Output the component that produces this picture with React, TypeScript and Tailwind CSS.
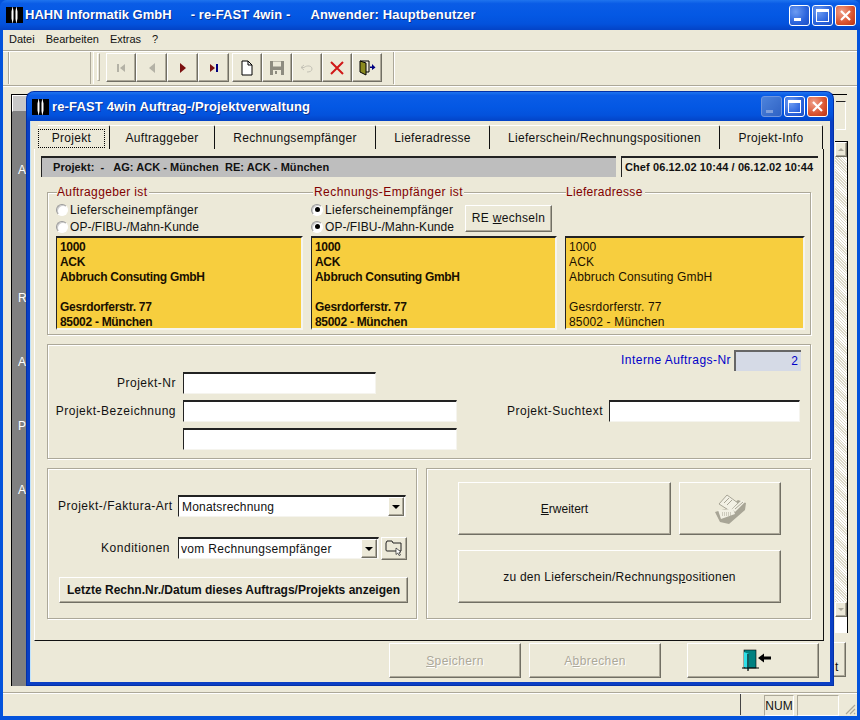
import { type ReactNode } from 'react';

const raised =
  'border border-t-white border-l-white border-r-[#716f64] border-b-[#716f64] bg-[#ece9d8] shadow-[inset_-1px_-1px_0_#aca899]';
const sunken =
  'border-t-2 border-l border-r border-b border-t-[#222] border-l-[#222] border-r-[#f5f4ee] border-b-[#f5f4ee]';
const group = 'border border-[#aca899] shadow-[inset_1px_1px_0_#fff,1px_1px_0_#fff]';

const titleBar =
  'bg-[linear-gradient(180deg,#1f74ee_0%,#0a5ce6_12%,#0458e4_50%,#0352dc_80%,#0343c6_100%)]';

function Logo() {
  return (
    <svg width="17" height="16" viewBox="0 0 17 16" className="shrink-0">
      <rect width="17" height="16" fill="#fff" />
      <path d="M0 0h6.500L5.500 4.500v7l1 4.500H0z" fill="#000" />
      <path d="M17 0h-6.500l1 4.500v7l-1 4.500H17z" fill="#000" />
      <path d="M6.800 0h3.400L9.500 4v8l.7 4H6.800l.7-4V4z" fill="#000" />
    </svg>
  );
}

function WinButton({ kind, faded }: { kind: 'min' | 'max' | 'close'; faded?: boolean }) {
  const bg =
    kind === 'close'
      ? 'bg-[radial-gradient(circle_at_30%_30%,#f0a08a,#d9532f_60%,#b83214)]'
      : faded
        ? 'bg-[linear-gradient(135deg,#4d83dc,#2f62c4)]'
        : 'bg-[radial-gradient(circle_at_30%_30%,#6d9cf2,#2a63dc_60%,#1d4fc4)]';
  return (
    <div className={`w-[21px] h-[21px] rounded-[3px] border ${faded ? 'border-[#6f95dd]' : 'border-white'} ${bg} flex items-center justify-center`}>
      {kind === 'min' && (
        <div className={`w-[7px] h-[3px] mt-[9px] -ml-[4px] ${faded ? 'bg-[#7f9fdc]' : 'bg-white'}`} />
      )}
      {kind === 'max' && <div className="w-[13px] h-[13px] border border-t-[3px] border-white" />}
      {kind === 'close' && (
        <svg width="13" height="13" viewBox="0 0 13 13">
          <path d="M2 2l9 9M11 2l-9 9" stroke="#fff" strokeWidth="2.200" />
        </svg>
      )}
    </div>
  );
}

function ToolButton({ children, w = 'w-[30px]' }: { children: ReactNode; w?: string }) {
  return <div className={`${raised} ${w} h-[29px] flex items-center justify-center`}>{children}</div>;
}

function Door({ small }: { small?: boolean }) {
  if (small) {
    return (
      <svg width="17" height="16" viewBox="0 0 17 16">
        <path d="M1 1h9v11H7" fill="none" stroke="#000" />
        <path d="M1 1l6 2v12l-6-3z" fill="#8a8a20" stroke="#000" />
        <path d="M11 6.500h2V4l3.500 3.500L13 10V8h-2z" fill="#000080" />
      </svg>
    );
  }
  return (
    <svg width="30" height="24" viewBox="0 0 30 24">
      <rect x="2" y="1" width="12" height="18" fill="#008080" stroke="#000" strokeWidth="0.600" />
      <path d="M2 3l5 2v16l-5-3z" fill="#2fe0e8" />
      <path d="M6 5v17" stroke="#000" strokeWidth="1.200" />
      <path d="M0 19h17" stroke="#000" />
      <path d="M16 9l6-4.500V7.500h7v3h-7V13.500z" fill="#000" />
    </svg>
  );
}

function Radio({ checked, label, tracking }: { checked?: boolean; label: string; tracking: string }) {
  return (
    <div className="flex items-center h-[17px] whitespace-nowrap">
      <div className="w-[12px] h-[12px] rounded-full border border-t-[#999] border-l-[#999] border-r-white border-b-white bg-white shadow-[inset_1px_1px_0_#ccc] flex items-center justify-center">
        {checked && <div className="w-[5px] h-[5px] rounded-full bg-black" />}
      </div>
      <span className={`ml-[2px] ${tracking}`}>{label}</span>
    </div>
  );
}

function AddressBox({ bold, w }: { bold?: boolean; w: string }) {
  return (
    <div className={`${w} h-[94px] overflow-hidden border-t-2 border-l border-r-2 border-b-2 border-t-[#222] border-l-[#222] border-r-[#f5f4ee] border-b-[#f5f4ee] bg-[#f7ce3e] pl-[3px] pt-[2px] leading-[15px] text-[#1a1000] ${bold ? 'font-bold tracking-[-0.3px]' : 'tracking-[0.15px]'}`}>
      <div>1000</div>
      <div>ACK</div>
      <div>Abbruch Consuting GmbH</div>
      <div>&nbsp;</div>
      <div>Gesrdorferstr. 77</div>
      <div>85002 - München</div>
    </div>
  );
}

function Tab({ label, w, active }: { label: string; w: string; active?: boolean }) {
  return (
    <div className={`${w} h-[24px] shrink-0 border-r border-r-[#111] border-t border-t-white rounded-tr-[2px] flex items-center justify-center pt-[1px] tracking-[0.3px]`}>
      {active ? (
        <div className="w-[67px] h-[19px] -ml-[4px] border border-dotted border-black flex items-center justify-center">
          {label}
        </div>
      ) : (
        label
      )}
    </div>
  );
}

function DropButton() {
  return (
    <div className={`${raised} w-[16px] h-[19px] shrink-0 flex items-center justify-center`}>
      <div className="w-0 h-0 border-l-[4px] border-r-[4px] border-t-[4px] border-l-transparent border-r-transparent border-t-black" />
    </div>
  );
}

function PrinterIcon() {
  return (
    <svg width="36" height="33" viewBox="0 0 36 33">
      <path d="M3 20l5 10 9 2 16-14 1-7-8-3-13 9z" fill="#a8a596" />
      <path d="M7 12l8-9 11 8-8 8z" fill="#f2f0e4" stroke="#a8a596" />
      <path d="M12 11l5-5M15 13l5-5" stroke="#a8a596" />
      <path d="M20 17l10-9 3 2-10 10z" fill="#f2f0e4" />
      <path d="M23 17l8-7M25 19l7-6" stroke="#a8a596" />
      <path d="M6 18l15-1 2 5-14 5z" fill="#f2f0e4" />
      <path d="M10 21h9M10 23h9" stroke="#a8a596" strokeDasharray="1 1" />
    </svg>
  );
}

function SideLabel({ text, y }: { text: string; y: string }) {
  return <div className={`absolute left-[6px] ${y} text-white tracking-[0.5px]`}>{text}</div>;
}

export default function App() {
  return (
    <div className="relative w-[860px] h-[720px] overflow-hidden bg-[#0353dc] font-['Liberation_Sans',Arial,sans-serif] text-[12px] text-[#111]">
      {/* main window */}
      <div className={`${titleBar} h-[30px] rounded-t-[7px] flex items-center pl-[6px] pr-[4px]`}>
        <Logo />
        <div className="ml-[2px] flex font-bold text-white text-[13px] [text-shadow:1px_1px_#0b2f8f]">
          <span>HAHN Informatik GmbH</span>
          <span className="ml-[19px] tracking-[0.1px]">- re-FAST 4win -</span>
          <span className="ml-[20px] tracking-[0.15px]">Anwender: Hauptbenutzer</span>
        </div>
        <div className="ml-auto flex gap-[2px]">
          <WinButton kind="min" />
          <WinButton kind="max" />
          <WinButton kind="close" />
        </div>
      </div>

      <div className="mx-[3px] h-[686px] flex flex-col bg-[#ece9d8]">
        <div className="h-[20px] flex items-center pl-[6px] pb-[2px] gap-[11px] text-[11px] shrink-0">
          <span>Datei</span>
          <span>Bearbeiten</span>
          <span>Extras</span>
          <span>?</span>
        </div>

        {/* toolbars */}
        <div className="h-[36px] shrink-0 border-t border-t-[#aca899] border-b border-b-[#aca899] shadow-[inset_0_1px_0_#fff,0_1px_0_#fff] flex">
          <div className="w-[5px]" />
          <div className="w-[83px] border-l border-l-[#aca899] border-r border-r-[#aca899] shadow-[inset_1px_0_0_#fff] my-[1px]" />
          <div className="w-[301px] ml-[2px] border-l border-l-white border-r border-r-[#aca899] my-[1px] flex items-start pt-[1px]">
            <div className="w-[3px] h-[28px] ml-[3px] mr-[6px] border border-t-white border-l-white border-r-[#aca899] border-b-[#aca899]" />
            <div className="flex">
              <ToolButton>
                <svg width="12" height="12" viewBox="0 0 12 12"><path d="M2 2h2v8H2zM10 2v8L5 6z" fill="#b4b2a6" /></svg>
              </ToolButton>
              <ToolButton w="w-[31px]">
                <svg width="12" height="12" viewBox="0 0 12 12"><path d="M9 1v10L3 6z" fill="#b4b2a6" /></svg>
              </ToolButton>
              <ToolButton w="w-[31px]">
                <svg width="12" height="12" viewBox="0 0 12 12"><path d="M3 1v10l6-5z" fill="#7b1010" /></svg>
              </ToolButton>
              <ToolButton w="w-[31px]">
                <svg width="12" height="12" viewBox="0 0 12 12"><path d="M2 2v8l5-4z" fill="#7b1010" /><path d="M8 2h2v8H8z" fill="#000080" /></svg>
              </ToolButton>
              <div className="w-[3px]" />
              <ToolButton>
                <svg width="14" height="16" viewBox="0 0 14 16"><path d="M2 1h6l4 4v10H2z" fill="#fff" stroke="#000" /><path d="M8 1v4h4" fill="none" stroke="#000" /></svg>
              </ToolButton>
              <ToolButton>
                <svg width="16" height="16" viewBox="0 0 16 16"><path d="M1 1h14v14H1z" fill="#8e8c80" /><path d="M4 1.500h8v5H4z" fill="#ece9d8" /><path d="M4 10h8v5H4z" fill="#ece9d8" /><path d="M6 11h2v3H6z" fill="#8e8c80" /></svg>
              </ToolButton>
              <ToolButton>
                <svg width="14" height="10" viewBox="0 0 14 10"><path d="M4 2L1 4.500 4 7" fill="none" stroke="#c4c2b6" /><path d="M1 4.500h3c3-2.500 8-2 8 1.500 0 2-2 3-5 3" fill="none" stroke="#c4c2b6" /></svg>
              </ToolButton>
              <ToolButton>
                <svg width="16" height="16" viewBox="0 0 16 16"><path d="M2 2l12 12M14 2L2 14" stroke="#d01818" strokeWidth="2" /></svg>
              </ToolButton>
              <ToolButton>
                <Door small />
              </ToolButton>
            </div>
          </div>
          <div className="flex-1 border-l border-l-white" />
        </div>

        {/* mdi area */}
        <div className="relative flex-1 overflow-hidden">
          <div className="absolute left-[8px] top-[8px] w-[836px] h-[592px] border-l border-t border-l-black border-t-black">
            <div className="absolute left-0 top-0 w-[16px] h-full bg-[#808080]">
              <div className="w-[16px] h-[17px] bg-[#c8c8c8] border border-t-white border-l-white border-r-[#808080] border-b-[#808080]" />
              <SideLabel text="A" y="top-[66px]" />
              <SideLabel text="R" y="top-[194px]" />
              <SideLabel text="Ad" y="top-[258px]" />
              <SideLabel text="P" y="top-[322px]" />
              <SideLabel text="Au" y="top-[386px]" />
            </div>
            {/* pieces of the window behind */}
            <div className="absolute left-[824px] top-[6px] w-[10px] h-[29px] border-t border-r border-b border-t-[#222] border-r-white border-b-white" />
            <div className="absolute left-[823px] top-[46px] w-[13px] h-[492px] border-r border-b border-t border-black bg-[#e8e5d4] bg-[repeating-linear-gradient(45deg,#fff_0_1px,#dcd9c8_1px_2px)]">
              <div className={`${raised} h-[15px] flex items-center justify-center`}>
                <div className="w-0 h-0 border-l-[3px] border-r-[3px] border-b-[3px] border-l-transparent border-r-transparent border-b-[#aca899]" />
              </div>
              <div className={`${raised} absolute left-0 top-[460px] w-full h-[15px] flex items-center justify-center`}>
                <div className="w-0 h-0 border-l-[3px] border-r-[3px] border-t-[3px] border-l-transparent border-r-transparent border-t-[#aca899]" />
              </div>
              <div className="absolute left-0 top-[475px] w-full h-[16px] bg-white" />
            </div>
            <div className={`${raised} absolute left-[820px] top-[547px] w-[14px] h-[35px] text-[12px] flex items-end leading-[18px] pl-[2px]`}>t</div>
            <div className="absolute left-[16px] top-[587px] w-[96px] h-[2px] bg-[#f5f4ee]" />
          </div>

          {/* dialog */}
          <div className="absolute left-[24px] top-[6px] w-[806px] h-[593px] rounded-t-[7px] bg-[#0a3fc4] shadow-[0_0_0_1px_#0331a8] flex flex-col">
            <div className={`${titleBar} h-[29px] shrink-0 rounded-t-[7px] flex items-center pl-[5px] pr-[5px]`}>
              <Logo />
              <div className="ml-[3px] font-bold text-white text-[13px] tracking-[0.15px] [text-shadow:1px_1px_#0b2f8f]">
                re-FAST 4win Auftrag-/Projektverwaltung
              </div>
              <div className="ml-auto flex gap-[2px]">
                <WinButton kind="min" faded />
                <WinButton kind="max" />
                <WinButton kind="close" />
              </div>
            </div>

            <div className="flex-1 mx-[3px] mb-[3px] bg-[#ece9d8] shadow-[inset_1px_0_0_#bfe3ff] flex flex-col pl-[4px] pt-[4px]">
              {/* tabs */}
              <div className="flex pl-[4px] h-[24px] shrink-0 w-[789px]">
                <Tab label="Projekt" w="w-[72px]" active />
                <Tab label="Auftraggeber" w="w-[105px]" />
                <Tab label="Rechnungsempfänger" w="w-[161px]" />
                <Tab label="Lieferadresse" w="w-[114px]" />
                <Tab label="Lieferschein/Rechnungspositionen" w="w-[230px]" />
                <Tab label="Projekt-Info" w="w-[103px]" />
              </div>

              {/* tab panel */}
              <div className="w-[790px] h-[492px] shrink-0 border-l border-l-white border-r border-r-[#111] border-b border-b-[#111] flex flex-col pl-[6px]">
                <div className="flex mt-[7px] h-[21px] shrink-0">
                  <div className="w-[575px] bg-[#bebebe] border-t-2 border-l border-t-[#222] border-l-[#222] pl-[11px] font-bold text-[11px] flex items-center whitespace-pre tracking-[0.05px]">
                    Projekt:  -   AG: ACK - München  RE: ACK - München
                  </div>
                  <div className="w-[197px] ml-[5px] border-t-2 border-l border-t-[#222] border-l-[#222] pl-[3px] font-bold text-[11px] flex items-center tracking-[0.1px]">
                    Chef 06.12.02 10:44 / 06.12.02 10:44
                  </div>
                </div>

                {/* address group */}
                <div className={`${group} ml-[6px] mt-[15px] w-[764px] h-[143px] shrink-0 pl-[8px] flex gap-[8px]`}>
                  <div className="w-[247px] -mt-[8px]">
                    <div className="h-[15px] leading-[15px] text-[#800000] tracking-[0.35px] pl-[1px]">
                      <span className="bg-[#ece9d8] pr-[2px]">Auftraggeber ist</span>
                    </div>
                    <div className="mt-[1px]">
                      <Radio label="Lieferscheinempfänger" tracking="tracking-[0.3px]" />
                      <Radio label="OP-/FIBU-/Mahn-Kunde" tracking="tracking-[0.05px]" />
                    </div>
                    <div className="mt-[1px]"><AddressBox bold w="w-[247px]" /></div>
                  </div>
                  <div className="w-[246px] -mt-[8px]">
                    <div className="h-[15px] leading-[15px] text-[#800000] tracking-[0.45px] pl-[2px]">
                      <span className="bg-[#ece9d8] px-[1px]">Rechnungs-Empfänger ist</span>
                    </div>
                    <div className="mt-[1px] flex items-center">
                      <div className="w-[154px]">
                        <Radio checked label="Lieferscheinempfänger" tracking="tracking-[0.3px]" />
                        <Radio checked label="OP-/FIBU-/Mahn-Kunde" tracking="tracking-[0.05px]" />
                      </div>
                      <div className={`${raised} w-[87px] h-[27px] flex items-center justify-center tracking-[0.3px]`}>
                        <span>RE <span className="underline">w</span>echseln</span>
                      </div>
                    </div>
                    <div className="mt-[1px]"><AddressBox bold w="w-[246px]" /></div>
                  </div>
                  <div className="w-[240px] -mt-[8px]">
                    <div className="h-[15px] leading-[15px] text-[#800000] tracking-[0.3px] pl-[1px]">
                      <span className="bg-[#ece9d8] pr-[2px]">Lieferadresse</span>
                    </div>
                    <div className="h-[36px]" />
                    <AddressBox w="w-[240px]" />
                  </div>
                </div>

                {/* project group */}
                <div className={`${group} ml-[6px] mt-[9px] w-[764px] h-[115px] shrink-0 pt-[4px] flex flex-col`}>
                  <div className="flex items-center justify-end h-[22px] pr-[9px]">
                    <span className="text-[#0000c8] tracking-[0.45px] mr-[3px]">Interne Auftrags-Nr</span>
                    <div className="w-[67px] h-[21px] border-t-2 border-l-2 border-t-[#666] border-l-[#666] bg-[#d5dae6] text-[#0000c8] text-right pr-[3px] leading-[19px]">2</div>
                  </div>
                  <div className="flex items-center h-[22px] mt-[1px]">
                    <span className="w-[128px] text-right tracking-[0.5px]">Projekt-Nr</span>
                    <div className={`${sunken} ml-[7px] w-[193px] h-[22px] bg-white`} />
                  </div>
                  <div className="flex items-center h-[22px] mt-[6px]">
                    <span className="w-[128px] text-right tracking-[0.5px] whitespace-nowrap">Projekt-Bezeichnung</span>
                    <div className={`${sunken} ml-[7px] w-[274px] h-[22px] bg-white`} />
                    <span className="ml-[50px] tracking-[0.5px]">Projekt-Suchtext</span>
                    <div className={`${sunken} ml-[6px] w-[191px] h-[22px] bg-white`} />
                  </div>
                  <div className="flex items-center h-[22px] mt-[6px] pl-[135px]">
                    <div className={`${sunken} w-[274px] h-[22px] bg-white`} />
                  </div>
                </div>

                {/* bottom groups */}
                <div className="flex ml-[6px] mt-[9px] gap-[9px]">
                  <div className={`${group} w-[370px] h-[151px] shrink-0 flex flex-col pl-[10px] pt-[26px]`}>
                    <div className="flex items-center h-[22px]">
                      <span className="w-[112px] text-right tracking-[0.5px] whitespace-nowrap">Projekt-/Faktura-Art</span>
                      <div className={`${sunken} ml-[8px] w-[228px] h-[22px] bg-white flex items-center justify-between pr-[1px] pl-[3px] tracking-[0.2px]`}>
                        <span>Monatsrechnung</span>
                        <DropButton />
                      </div>
                    </div>
                    <div className="flex items-center h-[22px] mt-[20px]">
                      <span className="w-[112px] text-right tracking-[0.5px]">Konditionen</span>
                      <div className={`${sunken} ml-[8px] w-[201px] h-[22px] bg-white flex items-center justify-between pr-[1px] pl-[2px] tracking-[0.3px]`}>
                        <span className="whitespace-nowrap">vom Rechnungsempfänger</span>
                        <DropButton />
                      </div>
                      <div className={`${raised} ml-[2px] w-[26px] h-[23px] flex items-center justify-center`}>
                        <svg width="18" height="16" viewBox="0 0 18 16">
                          <path d="M1 3l1-2h5l1 2h8v8H2a1 1 0 0 1-1-1z" fill="#ece9d8" stroke="#222" />
                          <path d="M11 8l5 4-2 .5 1.500 2.500-1.500.5-1.200-2.500-1.800 1.500z" fill="#fff" stroke="#222" strokeWidth="0.700" />
                        </svg>
                      </div>
                    </div>
                    <div className={`${raised} ml-[1px] mt-[18px] w-[349px] h-[26px] flex items-center justify-center font-bold whitespace-nowrap`}>
                      Letzte Rechn.Nr./Datum dieses Auftrags/Projekts anzeigen
                    </div>
                  </div>

                  <div className={`${group} w-[385px] h-[151px] shrink-0 pl-[31px] pt-[13px] flex flex-col`}>
                    <div className="flex gap-[8px]">
                      <div className={`${raised} w-[213px] h-[53px] flex items-center justify-center`}>
                        <span><span className="underline">E</span>rweitert</span>
                      </div>
                      <div className={`${raised} w-[102px] h-[53px] flex items-center justify-center`}>
                        <PrinterIcon />
                      </div>
                    </div>
                    <div className={`${raised} mt-[15px] w-[323px] h-[53px] flex items-center justify-center tracking-[0.25px]`}>
                      <span>zu den Lieferschein/Rechnungs<span className="underline">p</span>ositionen</span>
                    </div>
                  </div>
                </div>
              </div>

              {/* dialog buttons */}
              <div className="flex mt-[2px] pl-[355px] text-[#aca899] tracking-[0.4px] [text-shadow:1px_1px_#fff]">
                <div className={`${raised} w-[132px] h-[35px] flex items-center justify-center`}>
                  <span><span className="underline">S</span>peichern</span>
                </div>
                <div className={`${raised} ml-[8px] w-[132px] h-[35px] flex items-center justify-center`}>
                  <span>A<span className="underline">b</span>brechen</span>
                </div>
                <div className={`${raised} ml-[26px] w-[132px] h-[35px] flex items-center justify-center pl-[8px]`}>
                  <Door />
                </div>
              </div>
            </div>
          </div>
        </div>

        {/* status bar */}
        <div className="relative h-[24px] shrink-0 border-t border-t-[#aca899] shadow-[inset_0_1px_0_#fff] flex justify-end items-stretch pr-[18px] text-[12px]">
          <div className="w-[24px] border-l border-l-[#444] my-[1px]" />
          <div className="w-[30px] mt-[2px] border border-t-[#aca899] border-l-[#aca899] border-r-white border-b-white flex items-center justify-center">NUM</div>
          <div className="w-[42px] mt-[2px] ml-[3px] border border-t-[#aca899] border-l-[#aca899] border-r-white border-b-white" />
          <svg width="12" height="12" viewBox="0 0 12 12" className="absolute right-[1px] bottom-[1px]">
            <path d="M11 2L2 11M11 6l-5 5M11 10l-1 1" stroke="#aca899" strokeWidth="1.200" />
          </svg>
        </div>
      </div>
    </div>
  );
}
